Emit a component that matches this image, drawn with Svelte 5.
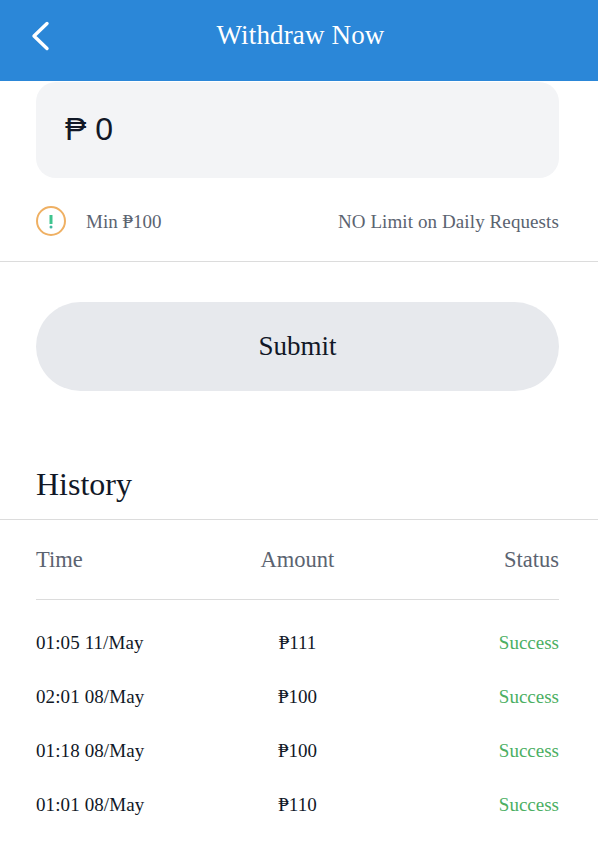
<script>
	const rows = [
		{ time: '01:05 11/May', amount: '₱111', status: 'Success' },
		{ time: '02:01 08/May', amount: '₱100', status: 'Success' },
		{ time: '01:18 08/May', amount: '₱100', status: 'Success' },
		{ time: '01:01 08/May', amount: '₱110', status: 'Success' }
	];
</script>

<div class="page">
	<header class="bar">
		<svg class="back" width="20" height="30" viewBox="0 0 20 30">
			<path d="M17 2.500 L4 15 L17 27.500" fill="none" stroke="#fff" stroke-width="3.400" stroke-linecap="round" stroke-linejoin="round" />
		</svg>
		<h1>Withdraw Now</h1>
	</header>

	<div class="form">
		<div class="amount">₱ 0</div>
		<div class="limits">
			<div class="min">
				<svg width="30" height="30" viewBox="0 0 30 30">
					<circle cx="15" cy="15" r="14" fill="none" stroke="#efb063" stroke-width="2" />
					<path d="M15 9 V18" stroke="#3fc48e" stroke-width="3" />
					<circle cx="15" cy="21" r="1.500" fill="#3fb8a0" />
				</svg>
				<span class="note">Min ₱100</span>
			</div>
			<span class="note daily">NO Limit on Daily Requests</span>
		</div>
	</div>

	<div class="actions">
		<button type="button">Submit</button>
	</div>

	<h2>History</h2>

	<div class="history">
		<div class="row head">
			<span>Time</span>
			<span>Amount</span>
			<span>Status</span>
		</div>
		{#each rows as r}
			<div class="row item">
				<span class="time">{r.time}</span>
				<span>{r.amount}</span>
				<span class="ok">{r.status}</span>
			</div>
		{/each}
	</div>
</div>

<style>
	:global(body) {
		background: #fff;
		font-family: "Liberation Serif", "Times New Roman", serif;
	}

	.page {
		width: 598px;
		color: #111827;
	}

	.bar {
		position: relative;
		height: 81px;
		background: #2b87d8;
		display: flex;
		align-items: center;
		justify-content: center;
	}

	.back {
		position: absolute;
		left: 30px;
		top: 21px;
	}

	h1 {
		margin: 0 0 0 3px;
		font-size: 27px;
		font-weight: 400;
		letter-spacing: 0.15px;
		color: #fff;
		line-height: 70px;
		padding-bottom: 11px;
	}

	.form {
		padding: 1px 39px 0 36px;
		border-bottom: 1px solid #dcdcdc;
	}

	.amount {
		height: 96px;
		padding-left: 29px;
		background: #f3f4f6;
		border-radius: 20px;
		font-family: "Liberation Sans", Arial, sans-serif;
		font-size: 32px;
		line-height: 95px;
	}

	.limits {
		height: 80px;
		padding-top: 3px;
		display: flex;
		align-items: center;
		justify-content: space-between;
		font-size: 19px;
		color: #5b6370;
	}

	.min {
		display: flex;
		align-items: center;
		gap: 20px;
	}

	.min svg {
		display: block;
	}

	.note {
		padding-top: 2px;
	}

	.daily {
		letter-spacing: 0.1px;
	}

	.actions {
		padding: 40px 39px 0 36px;
	}

	button {
		display: block;
		width: 100%;
		height: 89px;
		padding: 0;
		border: 0;
		border-radius: 45px;
		background: #e7e9ed;
		color: #111827;
		font-family: inherit;
		font-size: 27px;
	}

	h2 {
		margin: 69px 0 0;
		padding: 0 36px;
		height: 59px;
		line-height: 48px;
		font-size: 32px;
		font-weight: 400;
		border-bottom: 1px solid #dcdcdc;
		color: #111827;
	}

	.history {
		padding: 0 39px 0 36px;
	}

	.row {
		display: grid;
		grid-template-columns: 1fr 1fr 1fr;
		align-items: center;
	}

	.row span:nth-child(2) {
		text-align: center;
	}

	.row span:nth-child(3) {
		text-align: right;
	}

	.head {
		height: 79px;
		border-bottom: 1px solid #dcdcdc;
		margin-bottom: 16px;
		font-size: 22.500px;
		color: #5b6370;
	}

	.item {
		height: 54px;
		font-size: 19px;
	}

	.time {
		letter-spacing: 0.1px;
	}

	.ok {
		color: #4caf63;
	}
</style>
